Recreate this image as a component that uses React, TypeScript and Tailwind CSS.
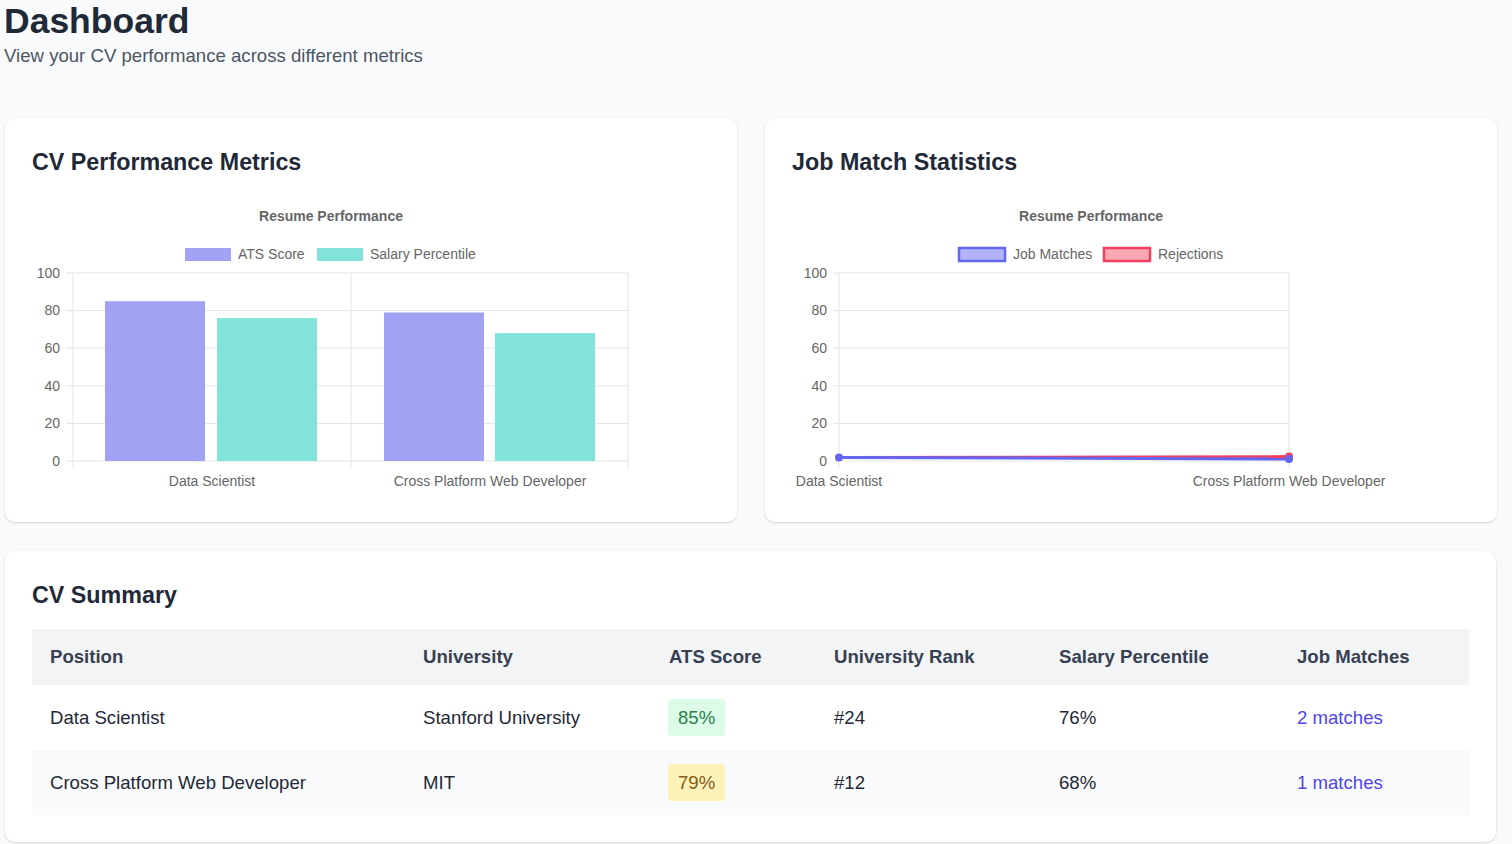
import React from "react";

const FONT = "'Liberation Sans', Arial, Helvetica, sans-serif";
const GRID = "#e5e5e5";
const LABEL = "#666666";

const yTicks = [100, 80, 60, 40, 20, 0];
const yT = 95;
const yB = 283;
const yOf = (v: number) => yB - (v / 100) * (yB - yT);

function BarChart() {
  const bars = [
    { x: 73, v: 85, c: "#a1a2f4" },
    { x: 185, v: 76, c: "#82e3d8" },
    { x: 352, v: 79, c: "#a1a2f4" },
    { x: 463, v: 68, c: "#82e3d8" },
  ];
  return (
    <svg width="678" height="330" fontFamily={FONT} className="block">
      <text x="299" y="39" textAnchor="middle" dominantBaseline="middle" fontSize="14" fontWeight="bold" fill={LABEL}>
        Resume Performance
      </text>
      <rect x="153" y="70" width="46" height="13" fill="#a1a2f4" />
      <text x="206" y="77" dominantBaseline="middle" fontSize="14" fill={LABEL}>ATS Score</text>
      <rect x="285" y="70" width="46" height="13" fill="#82e3d8" />
      <text x="338" y="77" dominantBaseline="middle" fontSize="14" fill={LABEL}>Salary Percentile</text>
      {yTicks.map((t) => (
        <g key={t}>
          <line x1="34" x2="596" y1={yOf(t)} y2={yOf(t)} stroke={GRID} strokeWidth="1" />
          <text x="28" y={yOf(t) + 1} textAnchor="end" dominantBaseline="middle" fontSize="14" fill={LABEL}>{t}</text>
        </g>
      ))}
      {[41, 319, 596].map((x) => (
        <line key={x} x1={x} x2={x} y1={yT} y2="291" stroke={GRID} strokeWidth="1" />
      ))}
      {bars.map((b, i) => (
        <rect key={i} x={b.x} y={yOf(b.v)} width="100" height={yB - yOf(b.v)} fill={b.c} />
      ))}
      <text x="180" y="304" textAnchor="middle" dominantBaseline="middle" fontSize="14" fill={LABEL}>Data Scientist</text>
      <text x="458" y="304" textAnchor="middle" dominantBaseline="middle" fontSize="14" fill={LABEL}>Cross Platform Web Developer</text>
    </svg>
  );
}

function LineChart() {
  return (
    <svg width="678" height="330" fontFamily={FONT} className="block overflow-visible">
      <text x="299" y="39" textAnchor="middle" dominantBaseline="middle" fontSize="14" fontWeight="bold" fill={LABEL}>
        Resume Performance
      </text>
      <rect x="167" y="70" width="46" height="13" fill="#b3b4f8" stroke="#6366f1" strokeWidth="2.5" />
      <text x="221" y="77" dominantBaseline="middle" fontSize="14" fill={LABEL}>Job Matches</text>
      <rect x="312" y="70" width="46" height="13" fill="#f9a8b4" stroke="#f43f5e" strokeWidth="2.5" />
      <text x="366" y="77" dominantBaseline="middle" fontSize="14" fill={LABEL}>Rejections</text>
      {yTicks.map((t) => (
        <g key={t}>
          <line x1="41" x2="497" y1={yOf(t)} y2={yOf(t)} stroke={GRID} strokeWidth="1" />
          <text x="35" y={yOf(t) + 1} textAnchor="end" dominantBaseline="middle" fontSize="14" fill={LABEL}>{t}</text>
        </g>
      ))}
      {[47, 497].map((x) => (
        <line key={x} x1={x} x2={x} y1={yT} y2="291" stroke={GRID} strokeWidth="1" />
      ))}
      <line x1="47" y1="279.5" x2="497" y2="278.6" stroke="#f43f5e" strokeWidth="3" />
      <circle cx="497" cy="278.6" r="4" fill="#f43f5e" />
      <line x1="47" y1="279.5" x2="497" y2="281" stroke="#6366f1" strokeWidth="3" />
      <circle cx="47" cy="279.5" r="4" fill="#6366f1" />
      <circle cx="497" cy="281" r="4" fill="#6366f1" />
      <text x="47" y="304" textAnchor="middle" dominantBaseline="middle" fontSize="14" fill={LABEL}>Data Scientist</text>
      <text x="497" y="304" textAnchor="middle" dominantBaseline="middle" fontSize="14" fill={LABEL}>Cross Platform Web Developer</text>
    </svg>
  );
}

const rows = [
  {
    pos: "Data Scientist",
    uni: "Stanford University",
    ats: "85%",
    badge: "bg-[#dcfce7] text-[#2f7f4c]",
    rank: "#24",
    sal: "76%",
    jobs: "2 matches",
    bg: "bg-white",
  },
  {
    pos: "Cross Platform Web Developer",
    uni: "MIT",
    ats: "79%",
    badge: "bg-[#fdf3b8] text-[#86591a]",
    rank: "#12",
    sal: "68%",
    jobs: "1 matches",
    bg: "bg-[#f9fafb]",
  },
];

const cols = "grid grid-cols-[373px_246px_165px_225px_238px_1fr]";

export default function App() {
  return (
    <div className="min-h-screen bg-[#f9fafb] font-['Liberation_Sans',Arial,sans-serif]">
      <div className="pl-[4px] pt-[2px]">
        <h1 className="text-[35.5px] leading-[39px] font-bold text-[#1f2937]">Dashboard</h1>
        <p className="mt-[1px] text-[18.6px] leading-[27px] text-[#4b5563]">
          View your CV performance across different metrics
        </p>
      </div>

      <div className="mt-[49px] flex gap-[28px] pl-[5px] pr-[16px]">
        <div className="flex-1 h-[404px] rounded-[10px] bg-white px-[27px] pt-[29px] shadow-[0_1px_3px_rgba(0,0,0,0.1),0_1px_2px_rgba(0,0,0,0.06)]">
          <h2 className="text-[23.3px] leading-[31px] font-bold text-[#1f2937]">CV Performance Metrics</h2>
          <BarChart />
        </div>
        <div className="flex-1 h-[404px] rounded-[10px] bg-white px-[27px] pt-[29px] shadow-[0_1px_3px_rgba(0,0,0,0.1),0_1px_2px_rgba(0,0,0,0.06)]">
          <h2 className="text-[23.3px] leading-[31px] font-bold text-[#1f2937]">Job Match Statistics</h2>
          <LineChart />
        </div>
      </div>

      <div className="mt-[29px] ml-[5px] mr-[16px] rounded-[10px] bg-white px-[27px] pt-[29px] pb-[27px] shadow-[0_1px_3px_rgba(0,0,0,0.1),0_1px_2px_rgba(0,0,0,0.06)]">
        <h2 className="text-[23.3px] leading-[31px] font-bold text-[#1f2937]">CV Summary</h2>
        <div className="mt-[18px] text-[18.6px]">
          <div className={`${cols} h-[56px] items-center bg-[#f3f4f6] font-bold text-[#374151]`}>
            <div className="px-[18px]">Position</div>
            <div className="px-[18px]">University</div>
            <div className="px-[18px]">ATS Score</div>
            <div className="px-[18px]">University Rank</div>
            <div className="px-[18px]">Salary Percentile</div>
            <div className="px-[18px]">Job Matches</div>
          </div>
          {rows.map((r) => (
            <div key={r.pos} className={`${cols} h-[65px] items-center ${r.bg} text-[#1f2937]`}>
              <div className="px-[18px]">{r.pos}</div>
              <div className="px-[18px]">{r.uni}</div>
              <div className="px-[17px]">
                <span className={`inline-block rounded-[4px] px-[10px] py-[5px] leading-[27px] ${r.badge}`}>{r.ats}</span>
              </div>
              <div className="px-[18px]">{r.rank}</div>
              <div className="px-[18px]">{r.sal}</div>
              <div className="px-[18px] text-[#4f46e5]">{r.jobs}</div>
            </div>
          ))}
        </div>
      </div>
    </div>
  );
}
